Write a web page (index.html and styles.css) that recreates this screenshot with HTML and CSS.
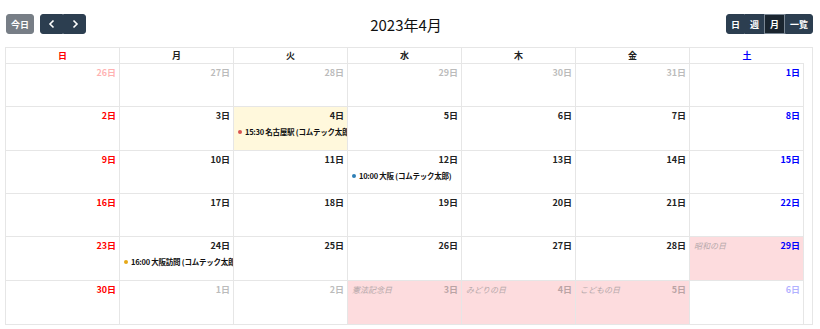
FILE: index.html
```html
<!DOCTYPE html>
<html lang="ja">
<head>
  <meta charset="UTF-8">
  <title>カレンダー</title>
  <link rel="stylesheet" href="styles.css">
</head>
<body>

  <div class="calendar">
    <div class="toolbar">
      <div class="tb-left">
        <button class="btn btn-today">今日</button>
        <div class="btn-group">
          <button class="btn btn-dark">
            <svg width="8" height="10" viewBox="0 0 8 10"><path d="M5.5 1.5 2 5l3.5 3.5" fill="none" stroke="#fff" stroke-width="1.6"/></svg>
          </button>
          <button class="btn btn-dark">
            <svg width="8" height="10" viewBox="0 0 8 10"><path d="M2.5 1.5 6 5 2.5 8.5" fill="none" stroke="#fff" stroke-width="1.6"/></svg>
          </button>
        </div>
      </div>
      <h2 class="title">2023年4月</h2>
      <div class="tb-right">
        <div class="btn-group">
          <button class="btn btn-dark">日</button>
          <button class="btn btn-dark">週</button>
          <button class="btn btn-dark active">月</button>
          <button class="btn btn-dark">一覧</button>
        </div>
      </div>
    </div>

    <div class="grid">
      <div class="head">
        <div class="hcell sun">日</div>
        <div class="hcell">月</div>
        <div class="hcell">火</div>
        <div class="hcell">水</div>
        <div class="hcell">木</div>
        <div class="hcell">金</div>
        <div class="hcell sat">土</div>
      </div>
      <div class="body">
        <div class="day sun other"><div class="top"><span class="num">26日</span></div></div>
        <div class="day other"><div class="top"><span class="num">27日</span></div></div>
        <div class="day other"><div class="top"><span class="num">28日</span></div></div>
        <div class="day other"><div class="top"><span class="num">29日</span></div></div>
        <div class="day other"><div class="top"><span class="num">30日</span></div></div>
        <div class="day other"><div class="top"><span class="num">31日</span></div></div>
        <div class="day sat"><div class="top"><span class="num">1日</span></div></div>

        <div class="day sun"><div class="top"><span class="num">2日</span></div></div>
        <div class="day"><div class="top"><span class="num">3日</span></div></div>
        <div class="day today">
          <div class="top"><span class="num">4日</span></div>
          <div class="event"><span class="dot red"></span>15:30 名古屋駅 (コムテック太郎)</div>
        </div>
        <div class="day"><div class="top"><span class="num">5日</span></div></div>
        <div class="day"><div class="top"><span class="num">6日</span></div></div>
        <div class="day"><div class="top"><span class="num">7日</span></div></div>
        <div class="day sat"><div class="top"><span class="num">8日</span></div></div>

        <div class="day sun"><div class="top"><span class="num">9日</span></div></div>
        <div class="day"><div class="top"><span class="num">10日</span></div></div>
        <div class="day"><div class="top"><span class="num">11日</span></div></div>
        <div class="day">
          <div class="top"><span class="num">12日</span></div>
          <div class="event"><span class="dot blue"></span>10:00 大阪 (コムテック太郎)</div>
        </div>
        <div class="day"><div class="top"><span class="num">13日</span></div></div>
        <div class="day"><div class="top"><span class="num">14日</span></div></div>
        <div class="day sat"><div class="top"><span class="num">15日</span></div></div>

        <div class="day sun"><div class="top"><span class="num">16日</span></div></div>
        <div class="day"><div class="top"><span class="num">17日</span></div></div>
        <div class="day"><div class="top"><span class="num">18日</span></div></div>
        <div class="day"><div class="top"><span class="num">19日</span></div></div>
        <div class="day"><div class="top"><span class="num">20日</span></div></div>
        <div class="day"><div class="top"><span class="num">21日</span></div></div>
        <div class="day sat"><div class="top"><span class="num">22日</span></div></div>

        <div class="day sun"><div class="top"><span class="num">23日</span></div></div>
        <div class="day">
          <div class="top"><span class="num">24日</span></div>
          <div class="event"><span class="dot orange"></span>16:00 大阪訪問 (コムテック太郎)</div>
        </div>
        <div class="day"><div class="top"><span class="num">25日</span></div></div>
        <div class="day"><div class="top"><span class="num">26日</span></div></div>
        <div class="day"><div class="top"><span class="num">27日</span></div></div>
        <div class="day"><div class="top"><span class="num">28日</span></div></div>
        <div class="day sat holiday"><div class="top"><span class="hname">昭和の日</span><span class="num">29日</span></div></div>

        <div class="day sun"><div class="top"><span class="num">30日</span></div></div>
        <div class="day other"><div class="top"><span class="num">1日</span></div></div>
        <div class="day other"><div class="top"><span class="num">2日</span></div></div>
        <div class="day other holiday"><div class="top"><span class="hname">憲法記念日</span><span class="num">3日</span></div></div>
        <div class="day other holiday"><div class="top"><span class="hname">みどりの日</span><span class="num">4日</span></div></div>
        <div class="day other holiday"><div class="top"><span class="hname">こどもの日</span><span class="num">5日</span></div></div>
        <div class="day sat other"><div class="top"><span class="num">6日</span></div></div>
      </div>
    </div>
  </div>

</body>
</html>
```

FILE: styles.css
```css
/*  Global  */
* {
  box-sizing: border-box;
}
body {
  margin: 0;
  font-family: "Noto Sans CJK JP", "Noto Sans", sans-serif;
  color: #212529;
  background: #fff;
}
.calendar {
  padding: 14px 7px 0 5px;
}

/*  Toolbar  */
.toolbar {
  display: flex;
  align-items: center;
  justify-content: space-between;
  height: 20px;
  margin-bottom: 13px;
}
.tb-left {
  display: flex;
  gap: 6px;
  padding-left: 1px;
}
.title {
  margin: 0;
  font-size: 15px;
  font-weight: 400;
  color: #111;
}
.btn-group {
  display: flex;
}
.btn {
  display: flex;
  align-items: center;
  justify-content: center;
  height: 20px;
  padding: 0 5px;
  border: 1px solid transparent;
  border-radius: 3px;
  font-family: inherit;
  font-size: 9px;
  font-weight: 700;
  color: #fff;
  white-space: nowrap;
  cursor: pointer;
}
.btn-today {
  width: 28px;
  padding: 0;
  background: #777e86;
  border-color: #777e86;
}
.btn-dark {
  background: #2c3e50;
  border-color: #2c3e50;
  border-radius: 0;
}
.btn-group .btn:first-child {
  border-radius: 3px 0 0 3px;
}
.btn-group .btn:last-child {
  border-radius: 0 3px 3px 0;
}
.tb-left .btn-dark {
  width: 23px;
}
.tb-right .btn-dark {
  min-width: 19px;
  padding: 0 4px;
}
.btn-dark.active {
  background: #1a252f;
  border-color: #7a8794;
  min-width: 21px;
}

/*  Grid  */
.grid {
  border: 1px solid #e6e6e6;
  height: 278px;
}
.head {
  display: grid;
  grid-template-columns: repeat(7, 114px);
  height: 16px;
  border-bottom: 1px solid #e6e6e6;
  width: 798px;
}
.hcell {
  display: flex;
  align-items: center;
  justify-content: center;
  border-right: 1px solid #e6e6e6;
  font-size: 9px;
  font-weight: 700;
  color: #222;
}
.hcell:last-child {
  border-right: none;
}
.hcell.sun {
  color: #f00;
}
.hcell.sat {
  color: #00f;
}
.body {
  display: grid;
  grid-template-columns: repeat(7, 114px);
  grid-template-rows: repeat(6, 1fr);
  height: 260px;
  width: 799px;
}
.day {
  border-right: 1px solid #e6e6e6;
  border-bottom: 1px solid #e6e6e6;
  padding: 3px 3px 0 4px;
  overflow: hidden;
  min-width: 0;
}
.day:nth-last-child(-n+7) {
  border-bottom: none;
}
.top {
  display: flex;
  justify-content: space-between;
  align-items: baseline;
  height: 12px;
}
.num {
  margin-left: auto;
  font-size: 9px;
  font-weight: 700;
  line-height: 12px;
  color: #222;
}
.sun .num {
  color: #f00;
}
.sat .num {
  color: #00f;
}
.other .num {
  opacity: 0.3;
}
.hname {
  font-size: 8px;
  font-style: italic;
  color: #b5a8aa;
  line-height: 12px;
}
.today {
  background: #fff8dc;
}
.holiday {
  background: #fddcde;
}

/*  Events  */
.event {
  display: flex;
  align-items: center;
  gap: 3px;
  margin-top: 5px;
  font-size: 7.5px;
  letter-spacing: -0.25px;
  font-weight: 700;
  color: #111;
  white-space: nowrap;
  line-height: 10px;
}
.dot {
  flex: none;
  width: 4px;
  height: 4px;
  border-radius: 50%;
}
.dot.red {
  background: #d9534f;
}
.dot.blue {
  background: #2f7fb5;
}
.dot.orange {
  background: #e6a817;
}
```
